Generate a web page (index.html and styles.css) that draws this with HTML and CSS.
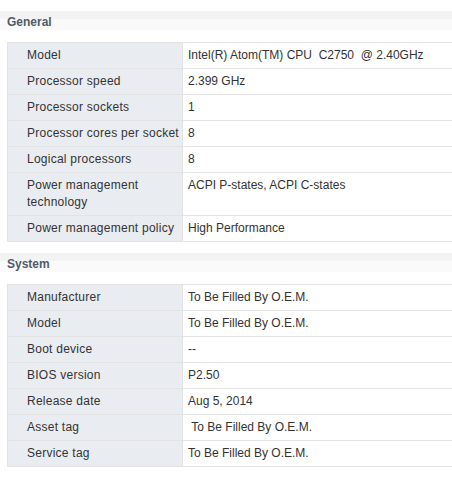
FILE: index.html
```
<!DOCTYPE html>
<html>
<head>
<meta charset="utf-8">
<link rel="stylesheet" href="styles.css">
</head>
<body>
<div class="page">
  <div class="section-head">General</div>
  <table class="props">
    <tr><td class="lbl">Model</td><td class="val">Intel(R) Atom(TM) CPU&nbsp; C2750&nbsp; @ 2.40GHz</td></tr>
    <tr><td class="lbl">Processor speed</td><td class="val">2.399 GHz</td></tr>
    <tr><td class="lbl">Processor sockets</td><td class="val">1</td></tr>
    <tr><td class="lbl">Processor cores per socket</td><td class="val">8</td></tr>
    <tr><td class="lbl">Logical processors</td><td class="val">8</td></tr>
    <tr><td class="lbl">Power management technology</td><td class="val">ACPI P-states, ACPI C-states</td></tr>
    <tr><td class="lbl">Power management policy</td><td class="val">High Performance</td></tr>
  </table>
  <div class="section-head">System</div>
  <table class="props">
    <tr><td class="lbl">Manufacturer</td><td class="val">To Be Filled By O.E.M.</td></tr>
    <tr><td class="lbl">Model</td><td class="val">To Be Filled By O.E.M.</td></tr>
    <tr><td class="lbl">Boot device</td><td class="val">--</td></tr>
    <tr><td class="lbl">BIOS version</td><td class="val">P2.50</td></tr>
    <tr><td class="lbl">Release date</td><td class="val">Aug 5, 2014</td></tr>
    <tr><td class="lbl">Asset tag</td><td class="val">&nbsp;To Be Filled By O.E.M.</td></tr>
    <tr><td class="lbl">Service tag</td><td class="val">To Be Filled By O.E.M.</td></tr>
  </table>
</div>
</body>
</html>
```
FILE: styles.css
```
html, body {
  margin: 0;
  padding: 0;
  background: #ffffff;
  overflow: hidden;
}
.page {
  padding-top: 11px;
  font-family: "Liberation Sans", Arial, sans-serif;
  font-size: 12px;
  color: #333333;
}
.section-head {
  height: 19px;
  line-height: 23px;
  padding-left: 7px;
  font-weight: bold;
  color: #4f5b67;
  background: linear-gradient(#f3f3f3 0, #f3f3f3 8px, #fafafa 8px, #fafafa 100%);
  margin-bottom: 12px;
}
.props {
  border-collapse: collapse;
  margin-left: 7px;
  width: 446px;
  margin-bottom: 11px;
}
.props td {
  border: 1px solid #e3e3e3;
  line-height: 17px;
  padding: 4px 4px 4px 5px;
  vertical-align: top;
}
.props td.lbl {
  width: 152px;
  padding-left: 19px;
  padding-right: 3px;
  letter-spacing: 0.25px;
  white-space: normal;
  background: #e9ecf1;
}
.props td.val {
  background: #ffffff;
}
```
